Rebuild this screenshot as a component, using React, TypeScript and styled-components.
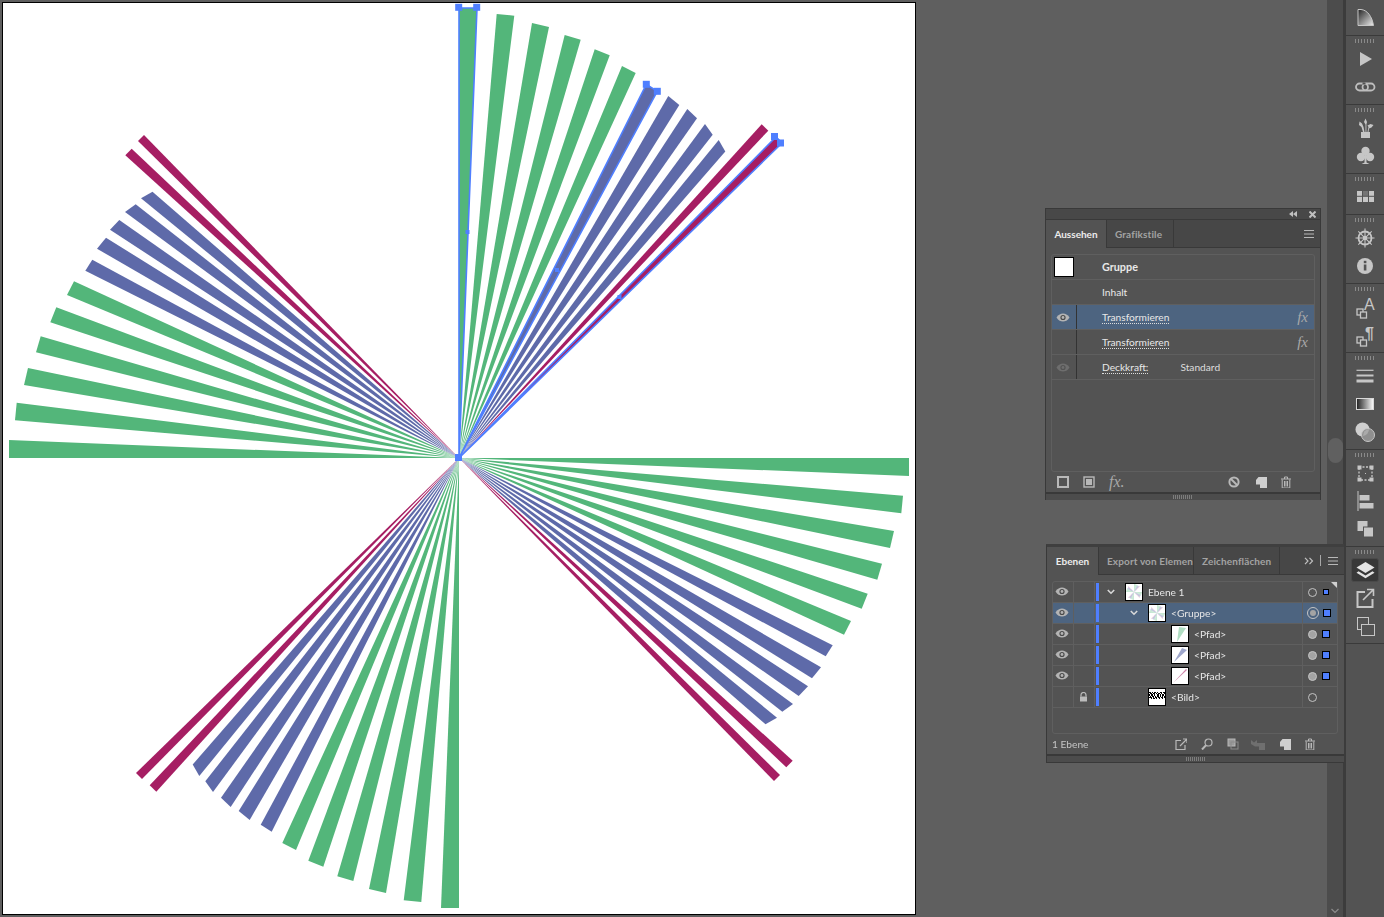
import React from "react";
import styled, { createGlobalStyle } from "styled-components";

const UI_FONT = `Lato, "Noto Sans", "Liberation Sans", sans-serif`;
const GREEN = "#53b67a";
const BLUE = "#5e6aa9";
const RED = "#a61e63";
const HANDLE = "#4f7fff";

const Global = createGlobalStyle`
  html, body { margin: 0; padding: 0; background: #5f5f5f; overflow: hidden; }
  * { box-sizing: border-box; }
`;

const Page = styled.div`
  width: 1384px;
  height: 917px;
  display: flex;
  background: #5f5f5f;
  font-family: ${UI_FONT};
  font-size: 10.2px;
  color: #e2e2e2;
  overflow: hidden;
`;
const Workspace = styled.main`
  position: relative;
  width: 1327px;
  height: 917px;
  padding: 2px 0 0 2px;
  flex: none;
`;
const Artboard = styled.div`
  width: 914px;
  height: 913px;
  background: #fff;
  border: 1px solid #000;
  svg { display: block; }
`;
const ScrollTrack = styled.div`
  width: 16px;
  flex: none;
  height: 917px;
  background: #4c4c4c;
  position: relative;
`;
const ScrollThumb = styled.div`
  position: absolute;
  left: 1px;
  top: 438px;
  width: 15px;
  height: 25px;
  border-radius: 8px;
  background: #606060;
`;
const ScrollArrow = styled.svg`
  position: absolute;
  left: 4px;
  bottom: 3px;
`;
const Divider = styled.div`
  width: 3px;
  flex: none;
  background: #3c3c3c;
`;
const Dock = styled.aside`
  width: 38px;
  flex: none;
  height: 917px;
  background: #535353;
  display: flex;
  flex-direction: column;
`;
const DockGroup = styled.div<{ $first?: boolean }>`
  display: flex;
  flex-direction: column;
  align-items: center;
  padding: ${(p) => (p.$first ? "4px 0 3px" : "3px 0 3px")};
  border-bottom: 1px solid #3a3a3a;
`;
const Grip = styled.div`
  width: 20px;
  height: 4px;
  margin-bottom: 2px;
  background: repeating-linear-gradient(90deg, #8a8a8a 0 1px, transparent 1px 3px);
`;
const DockButton = styled.div<{ $active?: boolean }>`
  width: 28px;
  height: 28px;
  display: flex;
  align-items: center;
  justify-content: center;
  position: relative;
  &::before {
    content: "";
    display: ${(p) => (p.$active ? "block" : "none")};
    position: absolute;
    inset: 2px 0;
    background: #383838;
    border-radius: 3px;
    border: 1px solid #4a4a4a;
  }
  svg { position: relative; }
`;

const AppearancePanel = styled.section`
  position: absolute;
  left: 1045px;
  top: 208px;
  width: 276px;
  height: 292px;
  background: #535353;
  border: 1px solid #393939;
  display: flex;
  flex-direction: column;
`;
const LayersPanel = styled.section`
  position: absolute;
  left: 1046px;
  top: 544px;
  width: 298px;
  height: 219px;
  background: #535353;
  border: 1px solid #393939;
  border-top: 3px solid #3f3f3f;
  border-right: none;
  display: flex;
  flex-direction: column;
  z-index: 2;
`;
const TitleBar = styled.div`
  height: 11px;
  flex: none;
  background: #484848;
  border-bottom: 1px solid #393939;
  display: flex;
  justify-content: flex-end;
  align-items: center;
  gap: 12px;
  padding-right: 4px;
`;
const TabBar = styled.div`
  height: 28px;
  flex: none;
  background: #474747;
  display: flex;
  align-items: stretch;
  border-bottom: 1px solid #393939;
  position: relative;
`;
const Tab = styled.div<{ $active?: boolean; $w: number }>`
  width: ${(p) => p.$w}px;
  flex: none;
  display: flex;
  align-items: center;
  justify-content: ${(p) => (p.$active ? "center" : "flex-start")};
  padding-left: ${(p) => (p.$active ? 0 : 8)}px;
  overflow: hidden;
  white-space: nowrap;
  font-size: 10px;
  font-weight: 700;
  letter-spacing: ${(p) => (p.$active ? 0 : 0.12)}px;
  color: ${(p) => (p.$active ? "#ececec" : "#a3a3a3")};
  background: ${(p) => (p.$active ? "#535353" : "#474747")};
  border-right: 1px solid #393939;
  margin-bottom: ${(p) => (p.$active ? "-1px" : "0")};
`;
const TabTools = styled.div`
  margin-left: auto;
  display: flex;
  align-items: center;
  gap: 4px;
  padding-right: 6px;
`;
const TabSep = styled.div`
  width: 1px;
  height: 11px;
  background: #a8a8a8;
  margin: 0 3px 0 2px;
`;
const RowList = styled.div<{ $variant: "appearance" | "layers" }>`
  margin: ${(p) => (p.$variant === "appearance" ? "6px 5px 0 5px" : "6px 6px 0 5px")};
  height: ${(p) => (p.$variant === "appearance" ? "218px" : "153px")};
  flex: none;
  border: 1px solid #5f5f5f;
  border-radius: 3px;
  position: relative;
`;
const Corner = styled.div`
  position: absolute;
  right: 0;
  top: 0;
  width: 0;
  height: 0;
  border-top: 6px solid #d0d0d0;
  border-left: 6px solid transparent;
`;
const AppearanceRow = styled.div<{ $active?: boolean }>`
  height: 25px;
  display: flex;
  align-items: center;
  border-bottom: 1px solid #5f5f5f;
  background: ${(p) => (p.$active ? "#4d6480" : "transparent")};
`;
const EyeSlot = styled.div<{ $rule?: boolean }>`
  width: 25px;
  align-self: stretch;
  display: flex;
  align-items: center;
  justify-content: center;
  flex: none;
  padding-right: 2px;
  border-right: 1px solid ${(p) => (p.$rule ? "#333" : "transparent")};
`;
const Swatch = styled.div`
  width: 20px;
  height: 20px;
  background: #fff;
  border: 1px solid #000;
  flex: none;
  margin-left: 2px;
`;
const RowLabel = styled.span<{ $bold?: boolean; $link?: boolean }>`
  margin-left: 25px;
  font-weight: ${(p) => (p.$bold ? 700 : 400)};
  font-size: ${(p) => (p.$bold ? 10.8 : 10.2)}px;
  color: #e8e8e8;
  line-height: 12px;
  border-bottom: ${(p) => (p.$link ? "1px dotted #dcdcdc" : "none")};
  white-space: nowrap;
`;
const RowValue = styled.span`
  margin-left: 32px;
  color: #dcdcdc;
`;
const Fx = styled.span<{ $small?: boolean }>`
  font-family: "Liberation Serif", serif;
  font-style: italic;
  font-size: ${(p) => (p.$small ? 16 : 15)}px;
  color: #a8a8a8;
  margin-left: auto;
  margin-right: 6px;
`;
const FooterBar = styled.div<{ $layers?: boolean }>`
  height: 20px;
  flex: none;
  display: flex;
  align-items: center;
  padding-left: ${(p) => (p.$layers ? 5 : 11)}px;
  position: relative;
`;
const FooterIcon = styled.div<{ $ml: number }>`
  margin-left: ${(p) => p.$ml}px;
  display: flex;
  align-items: center;
  font-family: "Liberation Serif", serif;
  font-style: italic;
  font-size: 16px;
  color: #a8a8a8;
`;
const FooterText = styled.span`
  color: #c4c4c4;
  width: 54px;
  flex: none;
`;
const GripBar = styled.div`
  margin-top: auto;
  height: 8px;
  flex: none;
  border-top: 2px solid #393939;
  display: flex;
  justify-content: center;
  align-items: center;
  background: #4c4c4c;
`;
const SmallGrip = styled.div`
  width: 20px;
  height: 4px;
  background: repeating-linear-gradient(90deg, #7d7d7d 0 1px, transparent 1px 2px);
`;

const LayerRow = styled.div<{ $active?: boolean }>`
  height: 21px;
  display: flex;
  align-items: stretch;
  border-bottom: 1px solid #5f5f5f;
  background: ${(p) => (p.$active ? "#4d6480" : "transparent")};
`;
const LayerCell = styled.div`
  width: 21px;
  flex: none;
  display: flex;
  align-items: center;
  justify-content: center;
  padding-right: 2px;
  border-right: 1px solid #5f5f5f;
`;
const LayerEye = styled.div`
  display: flex;
  margin-top: -2px;
`;
const ColorBar = styled.div`
  width: 3px;
  flex: none;
  margin: 1px 0 1px 1px;
  background: ${HANDLE};
`;
const Tree = styled.div<{ $depth: number }>`
  flex: 1;
  display: flex;
  align-items: center;
  padding-left: ${(p) => p.$depth * 23}px;
  min-width: 0;
`;
const ChevronSlot = styled.div`
  width: 26px;
  flex: none;
  display: flex;
  justify-content: center;
  padding-right: 2px;
`;
const Thumb = styled.div`
  width: 18px;
  height: 18px;
  flex: none;
  background: #fff;
  border: 1px solid #000;
  svg { display: block; }
`;
const LayerName = styled.span`
  margin-left: 5px;
  color: #e6e6e6;
  white-space: nowrap;
`;
const TargetCell = styled.div`
  width: 35px;
  flex: none;
  display: flex;
  align-items: center;
  border-left: 1px solid #5f5f5f;
  padding-left: 5px;
  gap: 5px;
`;
const TargetRing = styled.div<{ $kind: "hollow" | "filled" | "target" }>`
  width: 9px;
  height: 9px;
  border-radius: 50%;
  flex: none;
  border: 1px solid #c4c4c4;
  background: ${(p) => (p.$kind === "filled" ? "#a4a4a4" : "transparent")};
  position: relative;
  ${(p) =>
    p.$kind === "target"
      ? `width: 12px; height: 12px; margin-left: -1px; margin-right: -1px;
         &::after { content: ""; position: absolute; inset: 2px; border-radius: 50%; background: #a4a4a4; }`
      : ""}
`;
const SelectionSquare = styled.div<{ $small?: boolean }>`
  width: ${(p) => (p.$small ? 6 : 8)}px;
  height: ${(p) => (p.$small ? 6 : 8)}px;
  background: ${HANDLE};
  border: 1px solid #000;
  margin-left: ${(p) => (p.$small ? 1 : 0)}px;
`;

type Pt = [number, number];
type Wedge = { a: Pt; b: Pt; color: string };
const wedges: Wedge[] = [
  { a: [459, 8], b: [477, 8], color: GREEN },
  { a: [496.7, 14], b: [514.3, 15.7], color: GREEN },
  { a: [532, 23], b: [549, 27], color: GREEN },
  { a: [564.7, 35], b: [580.7, 39.7], color: GREEN },
  { a: [594.7, 49.3], b: [609.7, 55.3], color: GREEN },
  { a: [622, 66], b: [635.7, 73], color: GREEN },
  { a: [646.3, 84.3], b: [657.3, 91.3], color: BLUE },
  { a: [668.3, 96], b: [679.3, 105], color: BLUE },
  { a: [687.3, 109], b: [697, 118.3], color: BLUE },
  { a: [705, 124], b: [712.7, 134.7], color: BLUE },
  { a: [718.7, 140], b: [725.3, 151.5], color: BLUE },
  { a: [761.7, 124.3], b: [768.3, 130.7], color: RED },
  { a: [776, 137], b: [782, 143], color: RED },
];
const CX = 459;
const CY = 458;
const wedgePoints = (w: Wedge) => `${CX},${CY} ${w.a[0]},${w.a[1]} ${w.b[0]},${w.b[1]}`;

const Fan = ({ opacity = 1 }: { opacity?: number }) => (
  <g opacity={opacity}>
    {[0, 1, 2, 3].map((k) => (
      <g key={k} transform={`rotate(${90 * k} ${CX} ${CY})`}>
        {wedges.map((w, i) => (
          <polygon key={i} points={wedgePoints(w)} fill={w.color} />
        ))}
      </g>
    ))}
  </g>
);

const Handle = ({ x, y, s = 7 }: { x: number; y: number; s?: number }) => (
  <rect x={x - s / 2} y={y - s / 2} width={s} height={s} fill={HANDLE} />
);

const Artwork = () => (
  <svg width={912} height={911} viewBox="3 3 912 911">
    <Fan />
    {[wedges[0], wedges[6], wedges[12]].map((w, i) => (
      <polygon key={i} points={wedgePoints(w)} fill="none" stroke={HANDLE} strokeWidth={1.6} />
    ))}
    <Handle x={458.7} y={7.3} />
    <Handle x={476.7} y={7.3} />
    <Handle x={646.3} y={84.3} />
    <Handle x={657.3} y={91.3} />
    <Handle x={774.5} y={136.5} />
    <Handle x={780.5} y={143} />
    <Handle x={467.5} y={232} s={4} />
    <Handle x={557} y={270} s={4} />
    <Handle x={619.5} y={297} s={4} />
    <Handle x={458.5} y={457.5} s={7} />
  </svg>
);

const Eye = ({ dim }: { dim?: boolean }) => (
  <svg width={14} height={9} viewBox="0 0 14 9">
    <path d="M0.5 4.5C2.5 1.5 4.6 0.5 7 0.5s4.5 1 6.5 4c-2 3-4.1 4-6.5 4s-4.5-1-6.5-4z" fill={dim ? "#6e6e6e" : "#b4b4b4"} />
    <circle cx={7} cy={4.5} r={2.6} fill={dim ? "#535353" : "#4a4a4a"} />
    <circle cx={7} cy={4.5} r={1.4} fill={dim ? "#6e6e6e" : "#b4b4b4"} />
  </svg>
);
const Hamburger = () => (
  <svg width={10} height={8} viewBox="0 0 10 8">
    <path d="M0 .5h10M0 4h10M0 7.5h10" stroke="#b8b8b8" strokeWidth={1} />
  </svg>
);
const ChevronDown = () => (
  <svg width={8} height={6} viewBox="0 0 8 6">
    <path d="M.8 1l3.2 3.2L7.2 1" fill="none" stroke="#d8d8d8" strokeWidth={1.6} />
  </svg>
);

const noise = "1101011010011011 0110110101101001 1011010011010110 0101101011010101 1110101101101101 0010110100100100";
const ThumbArt = ({ kind }: { kind: "all" | "green" | "blue" | "red" | "image" }) => {
  if (kind === "all")
    return (
      <svg width={16} height={16} viewBox="3 3 912 911">
        <Fan opacity={0.7} />
      </svg>
    );
  if (kind === "green")
    return (
      <svg width={16} height={16} viewBox="0 0 16 16">
        <polygon points="5,16 7,1 14,2" fill={GREEN} opacity={0.45} />
      </svg>
    );
  if (kind === "blue")
    return (
      <svg width={16} height={16} viewBox="0 0 16 16">
        <polygon points="2,15 10,1 15,3" fill={BLUE} opacity={0.6} />
      </svg>
    );
  if (kind === "red")
    return (
      <svg width={16} height={16} viewBox="0 0 16 16">
        <polygon points="1,15 14,1 15,2" fill={RED} opacity={0.55} />
      </svg>
    );
  return (
    <svg width={16} height={16} viewBox="0 0 16 16" shapeRendering="crispEdges">
      {noise.split(" ").map((row, y) =>
        row.split("").map((c, x) =>
          c === "1" ? <rect key={`${x}-${y}`} x={x} y={y * 1.2 + 3} width={1} height={1.2} fill="#000" /> : null
        )
      )}
    </svg>
  );
};

const c = "#c6c6c6";
const dockIcons: Record<string, React.ReactNode> = {
  flatten: (
    <>
      <defs>
        <linearGradient id="fl" x1="0" y1="0" x2="1" y2="1">
          <stop offset="0" stopColor="#222" />
          <stop offset="1" stopColor="#eee" />
        </linearGradient>
      </defs>
      <path d="M5 3.5h3C14 4 19 10 20.5 19.5H5z" fill="url(#fl)" stroke={c} strokeWidth={1} />
    </>
  ),
  play: <path d="M7 5l12 7-12 7z" fill={c} />,
  link: (
    <>
      <rect x="3" y="8.5" width="12" height="7" rx="3.5" fill="none" stroke="#bdbdbd" strokeWidth="1.8" />
      <rect x="9.5" y="8.5" width="12" height="7" rx="3.5" fill="none" stroke="#bdbdbd" strokeWidth="1.8" />
      <path d="M9.5 8.5h3" stroke="#535353" strokeWidth="2" />
    </>
  ),
  brush: (
    <>
      <rect x="8" y="16" width="9" height="6" fill={c} />
      <path d="M10 16L8.5 11 6 9l.5-3.5L9 7.5l1.5 3.5 1 5zM12.5 16V8.5L11 6l1.5-3.5L14 6l-.6 2.5V16zM14.5 16l1-5-1-1.5 3-1.5 3 1-2 2.5-2.5 1-.5 3.5z" fill={c} />
    </>
  ),
  club: (
    <>
      <circle cx="12.5" cy="7" r="4.2" fill={c} />
      <circle cx="8" cy="13" r="4.2" fill={c} />
      <circle cx="17" cy="13" r="4.2" fill={c} />
      <path d="M11.5 9h2v9.5l3 1.5h-8l3-1.5z" fill={c} />
    </>
  ),
  swatches: (
    <>
      <rect x="4" y="6" width="17" height="11" fill={c} />
      <rect x="9.7" y="6" width="5.6" height="5" fill="#757575" />
      <path d="M4 11.3h17M9.5 6v11M15.5 6v11" stroke="#535353" strokeWidth="1" />
    </>
  ),
  wheel: (
    <>
      <path d="M12 2.5v19M2.5 12h19M5.3 5.3l13.4 13.4M18.7 5.3L5.3 18.7" stroke={c} strokeWidth="1.1" />
      <circle cx="12" cy="12" r="6.5" fill="none" stroke={c} strokeWidth="1.8" />
      <circle cx="12" cy="12" r="2.2" fill={c} />
    </>
  ),
  info: (
    <>
      <circle cx="12" cy="12" r="8" fill={c} />
      <rect x="10.8" y="10.5" width="2.6" height="6" fill="#535353" />
      <rect x="10.8" y="6.8" width="2.6" height="2.4" fill="#535353" />
    </>
  ),
  charStyle: (
    <>
      <rect x="4" y="14" width="6" height="6" fill="none" stroke={c} strokeWidth="1.3" />
      <rect x="7.5" y="17" width="6" height="6" fill="#535353" stroke={c} strokeWidth="1.3" />
      <text x="11" y="15" fontFamily="Liberation Sans, sans-serif" fontSize="16" fill={c}>A</text>
    </>
  ),
  paraStyle: (
    <>
      <rect x="4" y="14" width="6" height="6" fill="none" stroke={c} strokeWidth="1.3" />
      <rect x="7.5" y="17" width="6" height="6" fill="#535353" stroke={c} strokeWidth="1.3" />
      <text x="12" y="16" fontFamily="Liberation Sans, sans-serif" fontSize="16" fontWeight="700" fill={c}>¶</text>
    </>
  ),
  stroke: (
    <>
      <path d="M3.5 6.3h17" stroke={c} strokeWidth="1.2" />
      <path d="M3.5 11.5h17" stroke={c} strokeWidth="2" />
      <path d="M3.5 17h17" stroke={c} strokeWidth="3" />
    </>
  ),
  gradient: (
    <>
      <defs>
        <linearGradient id="gr">
          <stop offset="0" stopColor="#1e1e1e" />
          <stop offset="1" stopColor="#fff" />
        </linearGradient>
      </defs>
      <rect x="3.5" y="6.5" width="17" height="11" fill="url(#gr)" stroke="#d8d8d8" strokeWidth="1" />
    </>
  ),
  transparency: (
    <>
      <circle cx="9.5" cy="9.5" r="7" fill="#cfcfcf" />
      <circle cx="15" cy="15" r="6.5" fill="#8f8f8f" stroke={c} strokeWidth="1" />
      <path d="M10 16a7 7 0 0 0 6-7 6.5 6.5 0 0 0-6 7z" fill="#aaa" />
    </>
  ),
  transform: (
    <>
      <rect x="6" y="6" width="13" height="13" fill="none" stroke={c} strokeWidth="1.3" strokeDasharray="2 1.5" />
      <path d="M4.5 4.5h4v4h-4zM16.5 4.5h4v4h-4zM4.5 16.5h4v4h-4zM16.5 16.5h4v4h-4z" fill={c} />
      <rect x="12" y="12" width="1" height="1" fill={c} />
    </>
  ),
  align: (
    <>
      <path d="M5 2v20" stroke={c} strokeWidth="1" />
      <rect x="6.5" y="6" width="10" height="5.5" fill={c} />
      <rect x="6.5" y="14" width="14" height="5.5" fill={c} />
    </>
  ),
  pathfinder: (
    <>
      <rect x="4.5" y="4" width="10" height="10" fill={c} />
      <rect x="10.5" y="10" width="10" height="10" fill={c} stroke="#535353" strokeWidth="1" />
    </>
  ),
  layers: (
    <>
      <path d="M12.5 4l9 5.5-9 5.5-9-5.5z" fill="#e4e4e4" />
      <path d="M5.5 13.3l7 4.3 7-4.3 2 1.4-9 5.6-9-5.6z" fill="#e4e4e4" />
    </>
  ),
  export: (
    <>
      <path d="M12 6H4.5v15h15v-8" fill="none" stroke={c} strokeWidth="2" />
      <path d="M10 14L20 4M14 3.5h6.5V10" fill="none" stroke={c} strokeWidth="1.6" />
    </>
  ),
  artboards: (
    <>
      <rect x="4.5" y="3.5" width="11" height="12" fill="none" stroke={c} strokeWidth="1" />
      <rect x="8.5" y="10.5" width="13" height="11" fill="#535353" stroke={c} strokeWidth="1" />
    </>
  ),
};
const DockIcon = ({ name, active }: { name: string; active?: boolean }) => (
  <DockButton $active={active}>
    <svg width={24} height={24} viewBox="0 0 24 24">
      {dockIcons[name]}
    </svg>
  </DockButton>
);

const smallStroke = "#b8b8b8";
const smallIcons: Record<string, React.ReactNode> = {
  square: <rect x="1" y="1" width="10" height="10" fill="none" stroke={smallStroke} strokeWidth="2" />,
  squareFill: (
    <>
      <rect x="1" y="1" width="10" height="10" fill="none" stroke={smallStroke} strokeWidth="1.4" />
      <rect x="3" y="3" width="6" height="6" fill={smallStroke} />
    </>
  ),
  none: (
    <>
      <circle cx="6" cy="6" r="4.6" fill="none" stroke={smallStroke} strokeWidth="2" />
      <path d="M2.5 2.5l7 7" stroke={smallStroke} strokeWidth="2" />
    </>
  ),
  newItem: <path d="M3.5 1H12v11H5V8.5H1V4z" fill="#cfcfcf" />,
  trash: (
    <>
      <path d="M1 3h10M4.5 3V1h3v2" fill="none" stroke={smallStroke} strokeWidth="1" />
      <path d="M2.2 3.5v8.5h7.6V3.5M4.5 5v5.5M6 5v5.5M7.5 5v5.5" fill="none" stroke={smallStroke} strokeWidth="1" />
    </>
  ),
  exportSmall: (
    <>
      <path d="M6 2.5H1v9h9V7" fill="none" stroke={smallStroke} strokeWidth="1.2" />
      <path d="M5 8l6.5-6.5M8 1h4v4" fill="none" stroke={smallStroke} strokeWidth="1.2" />
    </>
  ),
  search: (
    <>
      <circle cx="7.5" cy="4.5" r="3.5" fill="none" stroke={smallStroke} strokeWidth="1.2" />
      <path d="M5 7.2L1 11.5" stroke={smallStroke} strokeWidth="2" />
    </>
  ),
  collect: (
    <>
      <rect x="1" y="1" width="7" height="7" fill="#9a9a9a" stroke={smallStroke} strokeWidth="1" />
      <rect x="4" y="4" width="7" height="7" fill="none" stroke="#8a8a8a" strokeWidth="1" />
    </>
  ),
  release: <path d="M0 2l3 2.5L6 2v3h8v7H8V8.5H4L0 6z" fill="#6f6f6f" />,
};
const SmallIcon = ({ name, ml, w = 12 }: { name: string; ml: number; w?: number }) => (
  <FooterIcon $ml={ml}>
    <svg width={w} height={12} viewBox={`0 0 ${w} 12`}>
      {smallIcons[name]}
    </svg>
  </FooterIcon>
);

const layerRows = [
  { id: 1, name: "Ebene 1", depth: 0, thumb: "all", chevron: true, ring: "hollow", square: "small", eye: true },
  { id: 2, name: "<Gruppe>", depth: 1, thumb: "all", chevron: true, ring: "target", square: "full", eye: true, active: true },
  { id: 3, name: "<Pfad>", depth: 2, thumb: "green", ring: "filled", square: "full", eye: true },
  { id: 4, name: "<Pfad>", depth: 2, thumb: "blue", ring: "filled", square: "full", eye: true },
  { id: 5, name: "<Pfad>", depth: 2, thumb: "red", ring: "filled", square: "full", eye: true },
  { id: 6, name: "<Bild>", depth: 1, thumb: "image", ring: "hollow", lock: true },
] as const;

const dockGroups: string[][] = [
  ["flatten"],
  ["play", "link"],
  ["brush", "club"],
  ["swatches"],
  ["wheel", "info"],
  ["charStyle", "paraStyle"],
  ["stroke", "gradient", "transparency"],
  ["transform", "align", "pathfinder"],
  ["layers", "export", "artboards"],
];

export default function App() {
  return (
    <Page>
      <Global />
      <Workspace>
        <Artboard>
          <Artwork />
        </Artboard>
        <AppearancePanel>
          <TitleBar>
            <svg width={8} height={6} viewBox="0 0 8 6">
              <path d="M4 0v6L0 3zM8 0v6L4 3z" fill="#c0c0c0" />
            </svg>
            <svg width={7} height={7} viewBox="0 0 7 7">
              <path d="M.5.5l6 6M6.5.5l-6 6" stroke="#c0c0c0" strokeWidth="2" />
            </svg>
          </TitleBar>
          <TabBar>
            <Tab $active $w={61}>Aussehen</Tab>
            <Tab $w={67}>Grafikstile</Tab>
            <TabTools>
              <Hamburger />
            </TabTools>
          </TabBar>
          <RowList $variant="appearance">
            <AppearanceRow>
              <EyeSlot><Swatch /></EyeSlot>
              <RowLabel $bold>Gruppe</RowLabel>
            </AppearanceRow>
            <AppearanceRow>
              <EyeSlot />
              <RowLabel>Inhalt</RowLabel>
            </AppearanceRow>
            <AppearanceRow $active>
              <EyeSlot $rule><Eye /></EyeSlot>
              <RowLabel $link>Transformieren</RowLabel>
              <Fx>fx</Fx>
            </AppearanceRow>
            <AppearanceRow>
              <EyeSlot $rule />
              <RowLabel $link>Transformieren</RowLabel>
              <Fx>fx</Fx>
            </AppearanceRow>
            <AppearanceRow>
              <EyeSlot $rule><Eye dim /></EyeSlot>
              <RowLabel $link>Deckkraft:</RowLabel>
              <RowValue>Standard</RowValue>
            </AppearanceRow>
          </RowList>
          <FooterBar>
            <SmallIcon name="square" ml={0} />
            <SmallIcon name="squareFill" ml={14} />
            <FooterIcon $ml={14}>fx.</FooterIcon>
            <SmallIcon name="none" ml={103} />
            <SmallIcon name="newItem" ml={15} />
            <SmallIcon name="trash" ml={13} />
          </FooterBar>
          <GripBar><SmallGrip /></GripBar>
        </AppearancePanel>
        <LayersPanel>
          <TabBar>
            <Tab $active $w={52}>Ebenen</Tab>
            <Tab $w={95}>Export von Elemen</Tab>
            <Tab $w={86}>Zeichenflächen</Tab>
            <TabTools>
              <svg width={10} height={8} viewBox="0 0 10 8">
                <path d="M1 .8L4 4 1 7.2M5.5.8L8.5 4 5.5 7.2" fill="none" stroke="#c0c0c0" strokeWidth="1.2" />
              </svg>
              <TabSep />
              <Hamburger />
            </TabTools>
          </TabBar>
          <RowList $variant="layers">
            <Corner />
            {layerRows.map((r) => (
              <LayerRow key={r.id} $active={"active" in r && r.active}>
                <LayerCell>{"eye" in r && r.eye ? <LayerEye><Eye /></LayerEye> : null}</LayerCell>
                <LayerCell>
                  {"lock" in r && r.lock ? (
                    <svg width={9} height={10} viewBox="0 0 9 10">
                      <path d="M2 4.5V3a2.5 2.5 0 0 1 5 0v1.5" fill="none" stroke="#bcbcbc" strokeWidth="1.2" />
                      <rect x="1" y="4.5" width="7" height="5" fill="#bcbcbc" />
                    </svg>
                  ) : null}
                </LayerCell>
                <ColorBar />
                <Tree $depth={r.depth}>
                  <ChevronSlot>{"chevron" in r && r.chevron ? <ChevronDown /> : null}</ChevronSlot>
                  <Thumb><ThumbArt kind={r.thumb} /></Thumb>
                  <LayerName>{r.name}</LayerName>
                </Tree>
                <TargetCell>
                  <TargetRing $kind={r.ring} />
                  {"square" in r ? <SelectionSquare $small={r.square === "small"} /> : null}
                </TargetCell>
              </LayerRow>
            ))}
          </RowList>
          <FooterBar $layers>
            <FooterText>1 Ebene</FooterText>
            <SmallIcon name="exportSmall" ml={69} />
            <SmallIcon name="search" ml={14} />
            <SmallIcon name="collect" ml={14} />
            <SmallIcon name="release" ml={12} w={14} />
            <SmallIcon name="newItem" ml={14} />
            <SmallIcon name="trash" ml={13} />
          </FooterBar>
          <GripBar><SmallGrip /></GripBar>
        </LayersPanel>
      </Workspace>
      <ScrollTrack>
        <ScrollThumb />
        <ScrollArrow width={8} height={6} viewBox="0 0 8 6">
          <path d="M.5 1L4 4.5 7.5 1" fill="none" stroke="#8c8c8c" strokeWidth="1.2" />
        </ScrollArrow>
      </ScrollTrack>
      <Divider />
      <Dock>
        {dockGroups.map((group, gi) => (
          <DockGroup key={gi} $first={gi === 0}>
            {gi > 0 ? <Grip /> : null}
            {group.map((name) => (
              <DockIcon key={name} name={name} active={name === "layers"} />
            ))}
          </DockGroup>
        ))}
      </Dock>
    </Page>
  );
}
